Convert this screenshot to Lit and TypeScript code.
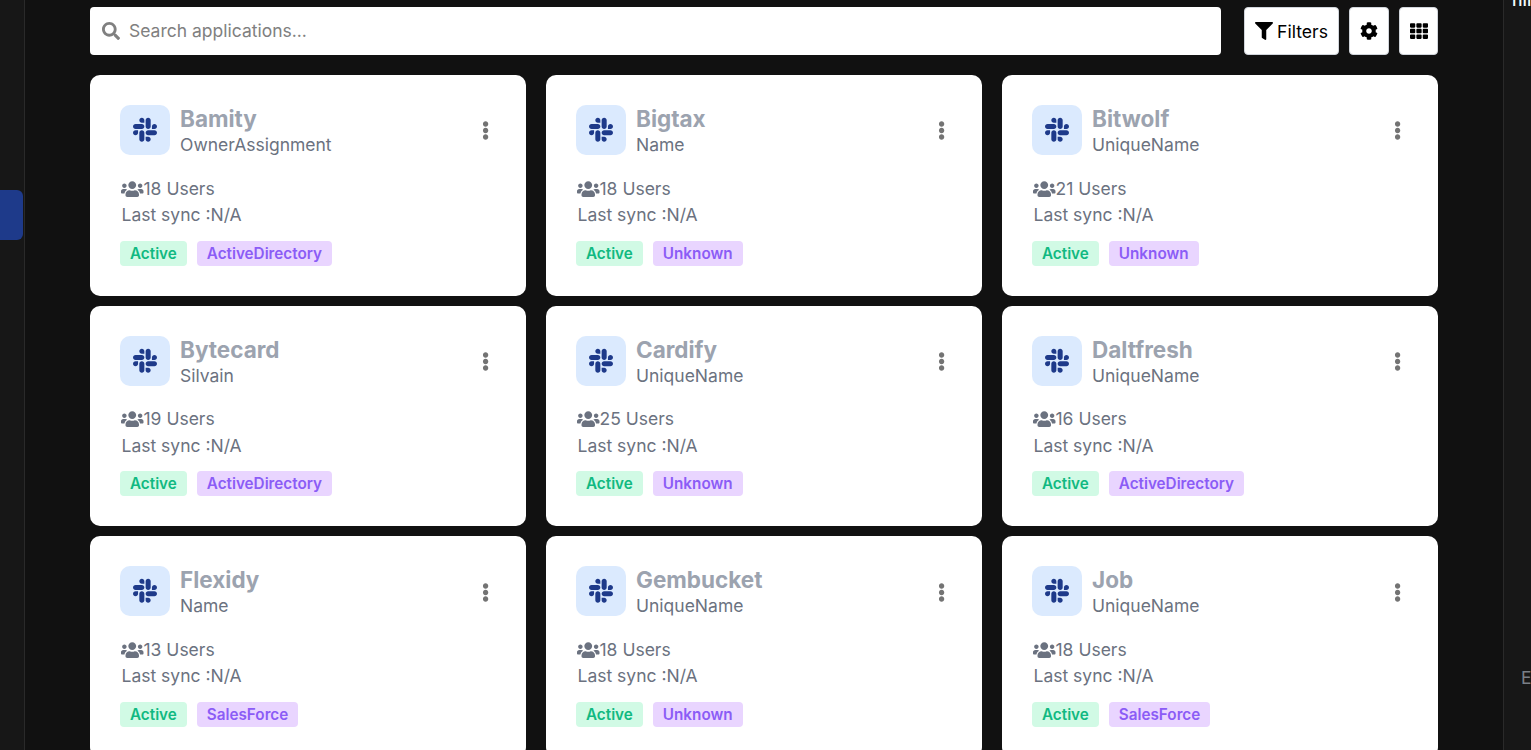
import { LitElement, html, css, svg } from "lit";
import { customElement } from "lit/decorators.js";

const SLACK = "M94.12 315.1c0 25.9-21.16 47.06-47.06 47.06S0 341 0 315.1c0-25.9 21.16-47.06 47.06-47.06h47.06v47.06zm23.72 0c0-25.9 21.16-47.06 47.06-47.06s47.06 21.16 47.06 47.06v117.84c0 25.9-21.16 47.06-47.06 47.06s-47.06-21.16-47.06-47.06V315.1zm47.06-188.98c-25.9 0-47.06-21.16-47.06-47.06S139 32 164.9 32s47.06 21.16 47.06 47.06v47.06H164.9zm0 23.72c25.9 0 47.06 21.16 47.06 47.06s-21.16 47.06-47.06 47.06H47.06C21.16 243.96 0 222.8 0 196.9s21.16-47.06 47.06-47.06H164.9zm188.98 47.06c0-25.9 21.16-47.06 47.06-47.06 25.9 0 47.06 21.16 47.06 47.06s-21.16 47.06-47.06 47.06h-47.06V196.9zm-23.72 0c0 25.9-21.16 47.06-47.06 47.06-25.9 0-47.06-21.16-47.06-47.06V79.06c0-25.9 21.16-47.06 47.06-47.06 25.9 0 47.06 21.16 47.06 47.06V196.9zM283.1 385.88c25.9 0 47.06 21.16 47.06 47.06 0 25.9-21.16 47.06-47.06 47.06-25.9 0-47.06-21.16-47.06-47.06v-47.06h47.06zm0-23.72c-25.9 0-47.06-21.16-47.06-47.06 0-25.9 21.16-47.06 47.06-47.06h117.84c25.9 0 47.06 21.16 47.06 47.06 0 25.9-21.16 47.06-47.06 47.06H283.1z";
const USERS = "M96 224c35.3 0 64-28.7 64-64s-28.7-64-64-64-64 28.7-64 64 28.7 64 64 64zm448 0c35.3 0 64-28.7 64-64s-28.7-64-64-64-64 28.7-64 64 28.7 64 64 64zm32 32h-64c-17.6 0-33.5 7.1-45.1 18.6 40.3 22.1 68.9 62 75.1 109.4h66c17.7 0 32-14.3 32-32v-32c0-35.3-28.7-64-64-64zm-256 0c61.9 0 112-50.1 112-112S381.9 32 320 32 208 82.1 208 144s50.1 112 112 112zm76.8 32h-8.3c-20.8 10-43.9 16-68.5 16s-47.6-6-68.5-16h-8.3C179.6 288 128 339.6 128 403.2V432c0 26.5 21.5 48 48 48h288c26.5 0 48-21.5 48-48v-28.8c0-63.6-51.6-115.2-115.2-115.2zm-223.7-13.4C161.5 263.1 145.6 256 128 256H64c-35.3 0-64 28.7-64 64v32c0 17.7 14.3 32 32 32h65.9c6.3-47.4 34.9-87.3 75.2-109.4z";
const FILTER = "M487.976 0H24.028C2.71 0-8.047 25.866 7.058 40.971L192 225.941V432c0 7.831 3.821 15.17 10.237 19.662l80 55.98C298.02 518.69 320 507.493 320 487.98V225.941l184.947-184.97C520.021 25.896 509.338 0 487.976 0z";
const SEARCH = "M505 442.7L405.3 343c-4.5-4.5-10.6-7-17-7H372c27.6-35.3 44-79.7 44-128C416 93.1 322.9 0 208 0S0 93.1 0 208s93.1 208 208 208c48.3 0 92.7-16.4 128-44v16.3c0 6.4 2.5 12.5 7 17l99.7 99.7c9.4 9.4 24.6 9.4 33.9 0l28.3-28.3c9.4-9.4 9.4-24.6.1-34zM208 336c-70.7 0-128-57.2-128-128 0-70.7 57.2-128 128-128 70.7 0 128 57.2 128 128 0 70.7-57.2 128-128 128z";
const COG = "M487.4 315.7l-42.6-24.6c4.3-23.2 4.3-47 0-70.2l42.6-24.6c4.9-2.8 7.1-8.6 5.5-14-11.1-35.6-30-67.8-54.7-94.6-3.8-4.1-10-5.1-14.8-2.3L380.8 110c-17.9-15.4-38.5-27.3-60.8-35.1V25.8c0-5.6-3.9-10.5-9.4-11.7-36.7-8.2-74.3-7.8-109.2 0-5.5 1.2-9.4 6.1-9.4 11.7V75c-22.2 7.9-42.8 19.8-60.8 35.1L88.7 85.5c-4.9-2.8-11-1.9-14.8 2.3-24.7 26.7-43.6 58.9-54.7 94.6-1.7 5.4.6 11.2 5.5 14L67.3 221c-4.3 23.2-4.3 47 0 70.2l-42.6 24.6c-4.9 2.8-7.1 8.6-5.5 14 11.1 35.6 30 67.8 54.7 94.6 3.8 4.1 10 5.1 14.8 2.3l42.6-24.6c17.9 15.4 38.5 27.3 60.8 35.1v49.2c0 5.6 3.9 10.5 9.4 11.7 36.7 8.2 74.3 7.8 109.2 0 5.5-1.2 9.4-6.1 9.4-11.7v-49.2c22.2-7.9 42.8-19.8 60.8-35.1l42.6 24.6c4.9 2.8 11 1.9 14.8-2.3 24.7-26.7 43.6-58.9 54.7-94.6 1.5-5.5-.7-11.3-5.6-14.1zM256 336c-44.1 0-80-35.9-80-80s35.9-80 80-80 80 35.9 80 80-35.9 80-80 80z";
const TH = "M149.333 56v80c0 13.255-10.745 24-24 24H24c-13.255 0-24-10.745-24-24V56c0-13.255 10.745-24 24-24h101.333c13.255 0 24 10.745 24 24zm181.334 240v-80c0-13.255-10.745-24-24-24H205.333c-13.255 0-24 10.745-24 24v80c0 13.255 10.745 24 24 24h101.333c13.256 0 24.001-10.745 24.001-24zm32-240v80c0 13.255 10.745 24 24 24H488c13.255 0 24-10.745 24-24V56c0-13.255-10.745-24-24-24H386.667c-13.255 0-24 10.745-24 24zm-32 80V56c0-13.255-10.745-24-24-24H205.333c-13.255 0-24 10.745-24 24v80c0 13.255 10.745 24 24 24h101.333c13.256 0 24.001-10.745 24.001-24zm-205.334 56H24c-13.255 0-24 10.745-24 24v80c0 13.255 10.745 24 24 24h101.333c13.255 0 24-10.745 24-24v-80c0-13.255-10.745-24-24-24zM0 376v80c0 13.255 10.745 24 24 24h101.333c13.255 0 24-10.745 24-24v-80c0-13.255-10.745-24-24-24H24c-13.255 0-24 10.745-24 24zm386.667-56H488c13.255 0 24-10.745 24-24v-80c0-13.255-10.745-24-24-24H386.667c-13.255 0-24 10.745-24 24v80c0 13.255 10.745 24 24 24zm0 160H488c13.255 0 24-10.745 24-24v-80c0-13.255-10.745-24-24-24H386.667c-13.255 0-24 10.745-24 24v80c0 13.255 10.745 24 24 24zM181.333 376v80c0 13.255 10.745 24 24 24h101.333c13.255 0 24-10.745 24-24v-80c0-13.255-10.745-24-24-24H205.333c-13.255 0-24 10.745-24 24z";
const DOTS = "M96 184c39.8 0 72 32.2 72 72s-32.2 72-72 72-72-32.2-72-72 32.2-72 72-72zM24 80c0 39.8 32.2 72 72 72s72-32.2 72-72S135.8 8 96 8 24 40.2 24 80zm0 352c0 39.8 32.2 72 72 72s72-32.2 72-72-32.2-72-72-72-72 32.2-72 72z";

const icon = (d: string, vb: string, cls: string) =>
  html`<svg class=${cls} viewBox=${vb} aria-hidden="true">${svg`<path fill="currentColor" d=${d}></path>`}</svg>`;

const APPS = [
  ["Bamity", "OwnerAssignment", 18, "ActiveDirectory"],
  ["Bigtax", "Name", 18, "Unknown"],
  ["Bitwolf", "UniqueName", 21, "Unknown"],
  ["Bytecard", "Silvain", 19, "ActiveDirectory"],
  ["Cardify", "UniqueName", 25, "Unknown"],
  ["Daltfresh", "UniqueName", 16, "ActiveDirectory"],
  ["Flexidy", "Name", 13, "SalesForce"],
  ["Gembucket", "UniqueName", 18, "Unknown"],
  ["Job", "UniqueName", 18, "SalesForce"],
];

@customElement("app-root")
export class AppRoot extends LitElement {
  static styles = css`
    :host {
      display: flex;
      height: 750px;
      overflow: hidden;
      background: #111111;
      font-family: Inter, "Liberation Sans", sans-serif;
    }
    .left {
      flex: 0 0 24px;
      background: #171717;
      border-right: 1px solid #2a2a2a;
      padding-top: 190px;
      box-sizing: content-box;
    }
    .active-tab {
      width: 23px;
      height: 50px;
      background: #1e3a8a;
      border-radius: 0 6px 6px 0;
    }
    main {
      flex: 1 1 auto;
      min-width: 0;
      padding: 7px 65px 0;
      display: flex;
      flex-direction: column;
      gap: 20px;
    }
    .toolbar {
      display: flex;
      height: 48px;
      flex: 0 0 48px;
    }
    .search {
      flex: 1 1 auto;
      display: flex;
      align-items: center;
      gap: 9px;
      padding: 0 0 1px 12px;
      margin-right: 23px;
      background: #fff;
      border-radius: 4px;
      color: #808080;
      font-size: 17.5px;
    }
    .search svg { width: 18px; height: 18px; }
    .btn {
      display: flex;
      align-items: center;
      justify-content: center;
      gap: 4px;
      background: #fff;
      border: 1px solid #d1d5db;
      border-radius: 4px;
      box-sizing: border-box;
      color: #000;
      font-size: 17.6px;
      margin-left: 10px;
    }
    .btn.first { margin-left: 0; width: 95px; }
    .btn.gear { width: 40px; }
    .btn.grid { width: 39px; }
    .btn svg { width: 18px; height: 18px; }
    .cards {
      display: grid;
      grid-template-columns: repeat(3, 1fr);
      column-gap: 20px;
      row-gap: 10px;
    }
    .card {
      background: #fff;
      border-radius: 10px;
      padding: 30px;
      height: 220.6px;
      box-sizing: border-box;
    }
    .head {
      display: flex;
      align-items: flex-start;
      gap: 10px;
      height: 51px;
    }
    .logo {
      flex: 0 0 50px;
      height: 50px;
      border-radius: 10px;
      background: #dbeafe;
      color: #1e3a8a;
      display: flex;
      align-items: center;
      justify-content: center;
    }
    .logo svg { width: 24px; height: 27.4px; }
    .names { flex: 1 1 auto; min-width: 0; margin-top: 1px; }
    .title {
      font-size: 22.5px;
      font-weight: 700;
      line-height: 26px;
      color: #9ca3af;
    }
    .sub {
      font-size: 17.5px;
      line-height: 26px;
      color: #6b7280;
    }
    .more {
      width: 11px;
      height: 19px;
      margin: 16.4px 5px 0 0;
      color: #737373;
      display: flex;
      justify-content: center;
    }
    .more svg { width: 7.2px; height: 19px; }
    .meta {
      margin-top: 19.7px;
      font-size: 17.5px;
      line-height: 26.4px;
      color: #6b7280;
    }
    .users { display: flex; align-items: center; }
    .users svg { width: 22.5px; height: 18px; flex: none; margin-left: 1px; }
    .sync { padding-left: 1.5px; }
    .badges {
      display: flex;
      gap: 10px;
      margin-top: 12.3px;
    }
    .badge {
      height: 25px;
      line-height: 25px;
      padding: 0 10px;
      border-radius: 4px;
      font-size: 15.25px;
      font-weight: 600;
    }
    .green { background: #d1fae5; color: #10b981; }
    .purple { background: #e9d5ff; color: #8b5cf6; }
    .right {
      flex: 0 0 28px;
      border-left: 1px solid #2a2a2a;
      background: #171717;
      box-sizing: border-box;
      overflow: hidden;
      display: flex;
      flex-direction: column;
      justify-content: space-between;
      padding-left: 8px;
      color: #f2fbfb;
      white-space: nowrap;
    }
    .clip { line-height: 18px; margin-top: -9px; font-size: 17.5px; font-weight: 500; }
    .e { color: #7a7f87; margin-bottom: 61px; line-height: 22px; padding-left: 9px; font-size: 17.5px; }
  `;

  render() {
    return html`
      <div class="left"><div class="active-tab"></div></div>
      <main>
        <div class="toolbar">
          <div class="search">${icon(SEARCH, "0 0 512 512", "")}<span>Search applications...</span></div>
          <div class="btn first">${icon(FILTER, "0 0 512 512", "")}<span>Filters</span></div>
          <div class="btn gear">${icon(COG, "0 0 512 512", "")}</div>
          <div class="btn grid">${icon(TH, "0 0 512 512", "")}</div>
        </div>
        <div class="cards">
          ${APPS.map(
            ([name, sub, n, tag]) => html`
              <div class="card">
                <div class="head">
                  <div class="logo">${icon(SLACK, "0 0 448 512", "")}</div>
                  <div class="names">
                    <div class="title">${name}</div>
                    <div class="sub">${sub}</div>
                  </div>
                  <div class="more">${icon(DOTS, "0 0 192 512", "")}</div>
                </div>
                <div class="meta">
                  <div class="users">${icon(USERS, "0 0 640 512", "")}<span>${n} Users</span></div>
                  <div class="sync">Last sync :N/A</div>
                </div>
                <div class="badges">
                  <span class="badge green">Active</span>
                  <span class="badge purple">${tag}</span>
                </div>
              </div>
            `
          )}
        </div>
      </main>
      <div class="right"><div class="clip">hir</div><div class="e">E</div></div>
    `;
  }
}
